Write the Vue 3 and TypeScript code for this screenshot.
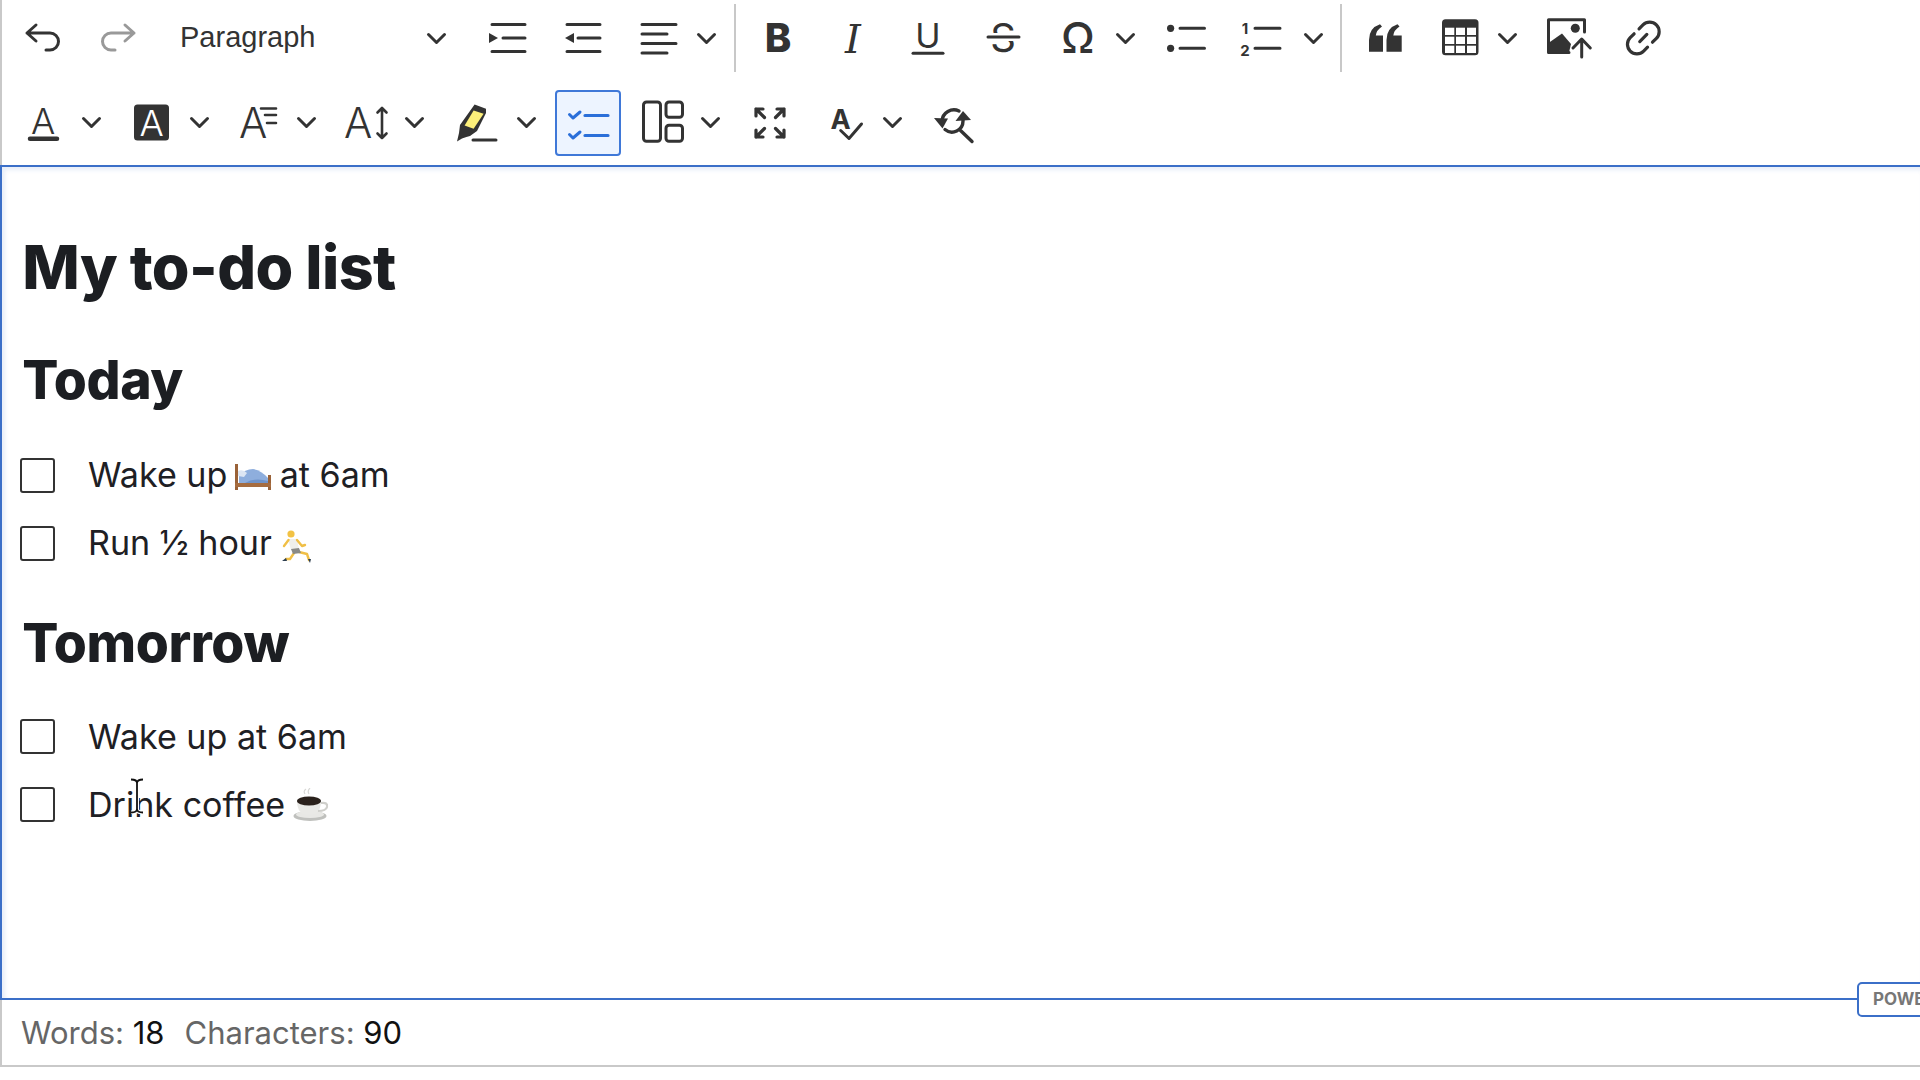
<script setup lang="ts">
interface Todo {
  before: string
  emoji?: 'bed' | 'run' | 'coffee'
  after?: string
}
const today: Todo[] = [
  { before: 'Wake up ', emoji: 'bed', after: ' at 6am' },
  { before: 'Run ½ hour ', emoji: 'run' },
]
const tomorrow: Todo[] = [
  { before: 'Wake up at 6am' },
  { before: 'Drink coffee ', emoji: 'coffee' },
]
const sections = [
  { title: 'Today', items: today },
  { title: 'Tomorrow', items: tomorrow },
]
</script>

<template>
  <div class="app">
    <div class="toolbar">
      <div class="row row-one">
        <span class="btn"><svg class="i" viewBox="0 0 36 36"><path d="M11 5 2 13l9 8M2 13h23a8.500 8.500 0 0 1 0 17h-4"/></svg></span>
        <span class="btn off"><svg class="i" viewBox="0 0 36 36"><path d="M25 5l9 8-9 8M34 13H11a8.500 8.500 0 0 0 0 17h4"/></svg></span>
        <span class="heading-select"><span class="heading-name">Paragraph</span><svg class="chev-i" viewBox="0 0 19 11"><path d="M1.500 1.500 9.500 9.500 17.500 1.500"/></svg></span>
        <span class="btn"><svg class="i" viewBox="0 0 36 36"><path d="M2 4.500h33M13 18h22M2 31.500h33"/><path class="solid" d="M-1 13l9 5-9 5z"/></svg></span>
        <span class="btn"><svg class="i" viewBox="0 0 36 36"><path d="M2 4.500h33M13 18h22M2 31.500h33"/><path class="solid" d="M9 13l-9 5 9 5z"/></svg></span>
        <span class="btn"><svg class="i" viewBox="0 0 36 36"><path d="M2 4.500h34M2 14h25M2 23.500h34M2 33h25"/></svg></span>
        <span class="chev chev-align"><svg class="chev-i" viewBox="0 0 19 11"><path d="M1.500 1.500 9.500 9.500 17.500 1.500"/></svg></span>
        <span class="sep sep-a"></span>
        <span class="btn"><svg class="i" viewBox="0 0 36 36"><text class="g bold" x="18" y="32.300">B</text></svg></span>
        <span class="btn"><svg class="i" viewBox="0 0 36 36"><text class="g ital" x="18" y="33">I</text></svg></span>
        <span class="btn"><svg class="i" viewBox="0 0 36 36"><text class="g under" x="18" y="27.500">U</text><path d="M3 33.200h30"/></svg></span>
        <span class="btn"><svg class="i" viewBox="0 0 36 36"><text class="g strike" x="18" y="32">S</text><rect class="knock" x="3" y="13" width="30" height="8"/><path d="M3 17h31"/></svg></span>
        <span class="btn"><svg class="i" viewBox="0 0 36 36"><text class="g omega" x="18" y="33">Ω</text></svg></span>
        <span class="chev"><svg class="chev-i" viewBox="0 0 19 11"><path d="M1.500 1.500 9.500 9.500 17.500 1.500"/></svg></span>
        <span class="btn"><svg class="i" viewBox="0 0 36 36"><circle class="solid" cx="3.600" cy="8.300" r="3.600"/><circle class="solid" cx="3.600" cy="28.300" r="3.600"/><path d="M13 8.300h24.500M13 28.300h24.500"/></svg></span>
        <span class="btn"><svg class="i" viewBox="0 0 36 36"><text class="g digit" x="3" y="14">1</text><text class="g digit" x="3" y="36">2</text><path d="M13 8.300h25M13 28.300h25"/></svg></span>
        <span class="chev chev-num"><svg class="chev-i" viewBox="0 0 19 11"><path d="M1.500 1.500 9.500 9.500 17.500 1.500"/></svg></span>
        <span class="sep sep-b"></span>
        <span class="btn"><svg class="i" viewBox="0 0 36 36"><path class="solid" d="M2 31.700V20Q2 8 13 4.300L15 6.500Q9.500 10 8.800 15.500H16V31.700Z"/><path class="solid" d="M19.500 31.700V20Q19.500 8 30.500 4.300L32.500 6.500Q27 10 26.300 15.500H34.700V31.700Z"/></svg></span>
        <span class="btn"><svg class="i" viewBox="0 0 36 36"><rect class="solid" x="0" y="-.7" width="36.500" height="36" rx="3.500"/><g class="cells"><rect x="3" y="7.700" width="9.300" height="7.300"/><rect x="14" y="7.700" width="9" height="7.300"/><rect x="25" y="7.700" width="9" height="7.300"/><rect x="3" y="16.700" width="9.300" height="7.300"/><rect x="14" y="16.700" width="9" height="7.300"/><rect x="25" y="16.700" width="9" height="7.300"/><rect x="3" y="25.700" width="9.300" height="7.300"/><rect x="14" y="25.700" width="9" height="7.300"/><rect x="25" y="25.700" width="9" height="7.300"/></g></svg></span>
        <span class="chev"><svg class="chev-i" viewBox="0 0 19 11"><path d="M1.500 1.500 9.500 9.500 17.500 1.500"/></svg></span>
        <span class="btn"><svg class="i" viewBox="0 0 36 36"><path d="M19 32.500H-1.500V-.2H34.500V12"/><path class="solid" d="M-1.500 32.500V23L12 13.500 21 24 19 32.500Z"/><circle class="solid" cx="25.300" cy="8.300" r="4.500"/><path d="M31.700 37V20M23 28 31.700 19 40.300 28"/></svg></span>
        <span class="btn"><svg class="i link" viewBox="0 0 36 36"><g transform="translate(18.300 18) rotate(-45)"><path d="M3.500-9.500H9A9.500 9.500 0 0 1 9 9.500H3.500M-3.500 9.500H-9A9.500 9.500 0 0 1-9-9.500H-3.500M-5 0H5"/></g></svg></span>
      </div>
      <div class="row row-two">
        <span class="btn"><svg class="i" viewBox="0 0 36 36"><text class="g thin" x="17" y="28.500">A</text><path class="thick" d="M4 33.800H31"/></svg></span>
        <span class="chev"><svg class="chev-i" viewBox="0 0 19 11"><path d="M1.500 1.500 9.500 9.500 17.500 1.500"/></svg></span>
        <span class="btn"><svg class="i" viewBox="0 0 36 36"><rect class="solid" x="0" y="-.5" width="35" height="36" rx="3.500"/><text class="g thin inv" x="17.500" y="30.500">A</text></svg></span>
        <span class="chev"><svg class="chev-i" viewBox="0 0 19 11"><path d="M1.500 1.500 9.500 9.500 17.500 1.500"/></svg></span>
        <span class="btn"><svg class="i" viewBox="0 0 36 36"><text class="g big" x="-2" y="33">A</text><path class="narrow" d="M20 3.500H35M24 10H35M26 18H35"/></svg></span>
        <span class="chev"><svg class="chev-i" viewBox="0 0 19 11"><path d="M1.500 1.500 9.500 9.500 17.500 1.500"/></svg></span>
        <span class="btn"><svg class="i" viewBox="0 0 36 36"><text class="g big" x="-5" y="33">A</text><path class="narrow" d="M33 3V33M28.500 7.500 33 3 37.500 7.500M28.500 28.500 33 33 37.500 28.500"/></svg></span>
        <span class="chev chev-size"><svg class="chev-i" viewBox="0 0 19 11"><path d="M1.500 1.500 9.500 9.500 17.500 1.500"/></svg></span>
        <span class="btn"><svg class="i" viewBox="0 0 36 36"><path class="solid" d="M17.600-.5 29 3.800V8L20 26 13 31 9.400 32 5 33.500 0 36.500 2 28 3 20Z"/><path class="marker" d="M16.600 5.500 26.600 8.800 16.600 23.800 7.600 20.500Z"/><path d="M16 35H39"/></svg></span>
        <span class="chev chev-pen"><svg class="chev-i" viewBox="0 0 19 11"><path d="M1.500 1.500 9.500 9.500 17.500 1.500"/></svg></span>
        <span class="todo-btn"><svg class="i" viewBox="0 0 36 36"><path class="blue-tick" d="M-.5 9.500 3 13 10 7M-.5 29.500 3 33 10 27"/><path class="blue-line" d="M15 10.500H38M15 30.500H38"/></svg></span>
        <span class="btn"><svg class="i" viewBox="0 0 36 36"><rect x="-1.500" y="-3" width="17" height="39.300" rx="3"/><rect x="21" y="-3" width="16.500" height="15.300" rx="3"/><rect x="21" y="20.300" width="16.500" height="16" rx="3"/></svg></span>
        <span class="chev chev-layout"><svg class="chev-i" viewBox="0 0 19 11"><path d="M1.500 1.500 9.500 9.500 17.500 1.500"/></svg></span>
        <span class="btn"><svg class="i" viewBox="0 0 36 36"><path class="corner" d="M4 11V4H11M4 4 12.500 12.500M25 4H32V11M32 4 23.500 12.500M4 25V32H11M4 32 12.500 23.500M25 32H32V25M32 32 23.500 23.500"/></svg></span>
        <span class="btn"><svg class="i" viewBox="0 0 36 36"><text class="g spell" x="3.500" y="23.500">A</text><path d="M13.700 25.500 22 33.500 34.500 19"/></svg></span>
        <span class="chev"><svg class="chev-i" viewBox="0 0 19 11"><path d="M1.500 1.500 9.500 9.500 17.500 1.500"/></svg></span>
        <span class="btn"><svg class="i find" viewBox="0 0 36 36"><path d="M7 16A12 12 0 0 1 24 6"/><path class="solid" d="M-1 13 13 13.500 7.500 23.500Z"/><path class="solid" d="M28 6 20.500 16 36 15Z"/><path d="M10 24.500A11 11 0 0 0 28 16V12M25 25 37 36.500"/></svg></span>
      </div>
    </div>

    <main class="editor">
      <h1>My to-do list</h1>
      <section v-for="section in sections" :key="section.title" class="section">
        <h2>{{ section.title }}</h2>
        <ul>
          <li v-for="item in section.items" :key="item.before">
            <span class="box"></span>
            <span class="label">{{ item.before }}<svg v-if="item.emoji === 'bed'" class="emoji" viewBox="0 0 38 38">
                <rect x="2" y="6" width="3" height="26" fill="#9a6238"/>
                <rect x="35" y="17" width="3" height="15" fill="#9a6238"/>
                <rect x="2" y="25" width="36" height="4" fill="#a66c3f"/>
                <path d="M6 25V18Q12 11 20 11Q28 12 35 20V25Z" fill="#8eaedd"/>
                <path d="M5 13Q10 11 14 15L11 19 5 18Z" fill="#dde6f3"/>
                <path d="M12 25Q22 19 35 23V25Z" fill="#6f93c9"/>
              </svg><svg v-else-if="item.emoji === 'run'" class="emoji" viewBox="0 0 38 38">
                <circle cx="13" cy="8" r="3.600" fill="#f2c244"/>
                <path d="M10 13 19 13 21 23 13 24Z" fill="#efefea"/>
                <path class="limb" d="M10.500 14 6 20M19 14 24 20 27 19M16 27 12 33 8 33M21 26 29 28 31 34"/>
                <path d="M13 23 21 22 23 27 15 28Z" fill="#8a8a86"/>
                <path d="M8 32 4 35 9 35ZM30 33 32 37 33 33Z" fill="#2c3e50"/>
              </svg><svg v-else-if="item.emoji === 'coffee'" class="emoji" viewBox="0 0 38 38">
                <g transform="translate(1 -3)">
                  <ellipse cx="18" cy="31" rx="16.500" ry="5" fill="#bfc0bd"/>
                  <ellipse cx="18" cy="29.500" rx="14" ry="3.500" fill="#e8e8e5"/>
                  <path d="M5 16H29Q29 30 17 30Q5 30 5 16Z" fill="#e9e9e6"/>
                  <path d="M29 18Q36 17 35 22Q34 26 26 26" fill="none" stroke="#cfcfcb" stroke-width="2.200"/>
                  <ellipse cx="17" cy="16" rx="12" ry="4.500" fill="#2a211c"/>
                  <path d="M13 9Q11 6 14 4M17 9Q15 6 18 3" fill="none" stroke="#d8d8d6" stroke-width="1.200"/>
                </g>
              </svg>{{ item.after }}</span>
          </li>
        </ul>
      </section>
      <svg class="ibeam" viewBox="0 0 16 36" aria-hidden="true">
        <path class="halo" d="M2 1.500Q8 1.500 8 5V31Q8 34.500 2 34.500M14 1.500Q8 1.500 8 5V31Q8 34.500 14 34.500"/>
        <path class="beam" d="M2 1.500Q8 1.500 8 5V31Q8 34.500 2 34.500M14 1.500Q8 1.500 8 5V31Q8 34.500 14 34.500"/>
      </svg>
    </main>

    <footer class="footer">
      <span class="count">Words: <b>18</b></span>
      <span class="count">Characters: <b>90</b></span>
      <span class="badge">POWERED BY</span>
    </footer>
  </div>
</template>

<style scoped>
.app {
  width: 1920px;
  height: 1080px;
  overflow: hidden;
  display: flex;
  flex-direction: column;
  background: #fff;
  color: #1e2024;
  font-family: Inter, "Liberation Sans", sans-serif;
}
.toolbar {
  height: 165px;
  box-sizing: border-box;
  border-left: 2px solid #c9c9c9;
  flex: none;
  color: #333;
}
.row {
  display: flex;
  align-items: center;
  padding-left: 3.500px;
}
.row-one { height: 76px; }
.row-two { height: 85px; padding-top: 4px; padding-left: 4.700px; }
.btn {
  width: 75px;
  height: 66px;
  flex: none;
  display: flex;
  align-items: center;
  justify-content: center;
}
.off { color: #999; }
.i {
  width: 36px;
  height: 36px;
  overflow: visible;
  fill: none;
  stroke: currentColor;
  stroke-width: 3;
  stroke-linecap: round;
  stroke-linejoin: round;
}
.link { stroke-width: 3.200; }
.find { stroke-width: 3.400; }
.solid { fill: currentColor; stroke: none; }
.knock { fill: #fff; stroke: none; }
.thick { stroke-width: 4.500; }
.narrow { stroke-width: 2.600; }
.cells rect { fill: #fff; stroke: none; }
.marker { fill: #fdf07a; stroke: none; }
.corner { stroke-width: 3.200; }
.blue-tick { color: #2b6fd9; stroke-width: 3; }
.blue-line { color: #2b6fd9; stroke-width: 3.200; }
.limb { fill: none; stroke: #f0bf46; stroke-width: 2.400; stroke-linecap: round; stroke-linejoin: round; }
.g { fill: currentColor; stroke: none; font-family: Inter, sans-serif; }
.bold { font-size: 40px; font-weight: 800; text-anchor: middle; }
.ital { font-family: "DejaVu Serif", serif; font-style: italic; font-size: 40px; text-anchor: middle; }
.under { font-size: 34px; font-weight: 400; text-anchor: middle; }
.strike { font-size: 40px; font-weight: 400; text-anchor: middle; }
.omega { font-size: 43px; font-weight: 500; text-anchor: middle; }
.digit { font-size: 15px; font-weight: 700; text-anchor: middle; }
.thin { font-size: 36px; font-weight: 350; text-anchor: middle; }
.inv { fill: #fff; }
.big { font-size: 42px; font-weight: 350; }
.spell { font-size: 27px; font-weight: 700; }
.heading-select {
  width: 315px;
  height: 66px;
  flex: none;
  box-sizing: border-box;
  padding: 0 24.500px;
  display: flex;
  align-items: center;
  justify-content: space-between;
  font-family: "Liberation Sans", Arial, sans-serif;
  font-size: 29px;
  color: #333;
}
.heading-name { padding-bottom: 2px; }
.chev {
  width: 20px;
  height: 66px;
  flex: none;
  margin-right: 12.500px;
  display: flex;
  align-items: center;
  justify-content: center;
}
.chev-i {
  width: 19px;
  height: 11px;
  flex: none;
  overflow: visible;
  fill: none;
  stroke: #333;
  stroke-width: 3;
  stroke-linecap: round;
  stroke-linejoin: round;
}
.chev-align { width: 22px; margin-right: 16.500px; }
.chev-num { width: 32px; margin-right: 10.500px; }
.chev-size { margin-right: 13px; }
.chev-pen { width: 28px; margin-right: 14.500px; }
.chev-layout { width: 21px; margin-right: 11.500px; }
.sep {
  width: 2px;
  height: 68px;
  flex: none;
  background: #c8c8c8;
}
.sep-a { margin-right: 4px; }
.sep-b { margin-right: 5.500px; }
.todo-btn {
  width: 66px;
  height: 66px;
  flex: none;
  box-sizing: border-box;
  margin-right: 4.500px;
  border: 2px solid #3f78d8;
  border-radius: 4px;
  background: #edf4ff;
  display: flex;
  align-items: center;
  justify-content: center;
}
.editor {
  position: relative;
  height: 835px;
  flex: none;
  box-sizing: border-box;
  border-top: 2px solid #3b6fc8;
  border-bottom: 2px solid #3b6fc8;
  border-left: 2px solid #3b6fc8;
  padding-left: 18px;
  box-shadow: inset 3px 3px 4px rgba(60, 110, 200, .12);
}
h1 {
  margin: 65px 0 0 2.200px;
  font-size: 61px;
  line-height: 70px;
  font-weight: 800;
  letter-spacing: -.6px;
  color: #1c1e22;
}
h2 {
  margin: 0 0 0 2.200px;
  font-size: 53.500px;
  line-height: 60px;
  font-weight: 800;
  letter-spacing: -.4px;
  color: #1c1e22;
}
.section { margin-top: 48px; }
.section + .section { margin-top: 36px; }
ul { list-style: none; margin: 31px 0 0; padding: 0; }
.section + .section ul { margin-top: 29px; }
.section + .section .label { padding-top: 2px; }
li {
  height: 68px;
  display: flex;
  align-items: center;
  gap: 33px;
}
.box {
  width: 35px;
  height: 35px;
  flex: none;
  box-sizing: border-box;
  border: 2px solid #333;
  border-radius: 3px;
}
.label {
  font-size: 34.100px;
  line-height: 68px;
  white-space: pre;
}
.emoji {
  display: inline-block;
  width: 38px;
  height: 38px;
  margin: 0 -1.200px 0 -3.700px;
  vertical-align: -9px;
}
.ibeam {
  position: absolute;
  left: 127px;
  top: 611px;
  width: 16px;
  height: 36px;
  fill: none;
}
.halo { stroke: #fff; stroke-width: 4; }
.beam { stroke: #111; stroke-width: 1.800; }
.footer {
  position: relative;
  height: 67px;
  flex: none;
  box-sizing: border-box;
  border-left: 2px solid #c9c9c9;
  border-bottom: 2px solid #c9c9c9;
  padding-left: 19px;
  display: flex;
  align-items: center;
  gap: 20px;
  font-size: 31px;
  color: #666;
}
.count b { font-weight: 400; color: #111; }
.badge {
  position: absolute;
  left: 1855px;
  top: -18px;
  height: 35px;
  box-sizing: border-box;
  padding: 0 14px;
  border: 2px solid #3b6fc8;
  border-radius: 5px;
  background: #fff;
  font-size: 17px;
  line-height: 31px;
  font-weight: 700;
  color: #777;
  white-space: nowrap;
}
</style>

<style>
html, body { margin: 0; background: #fff; overflow: hidden; }
</style>
